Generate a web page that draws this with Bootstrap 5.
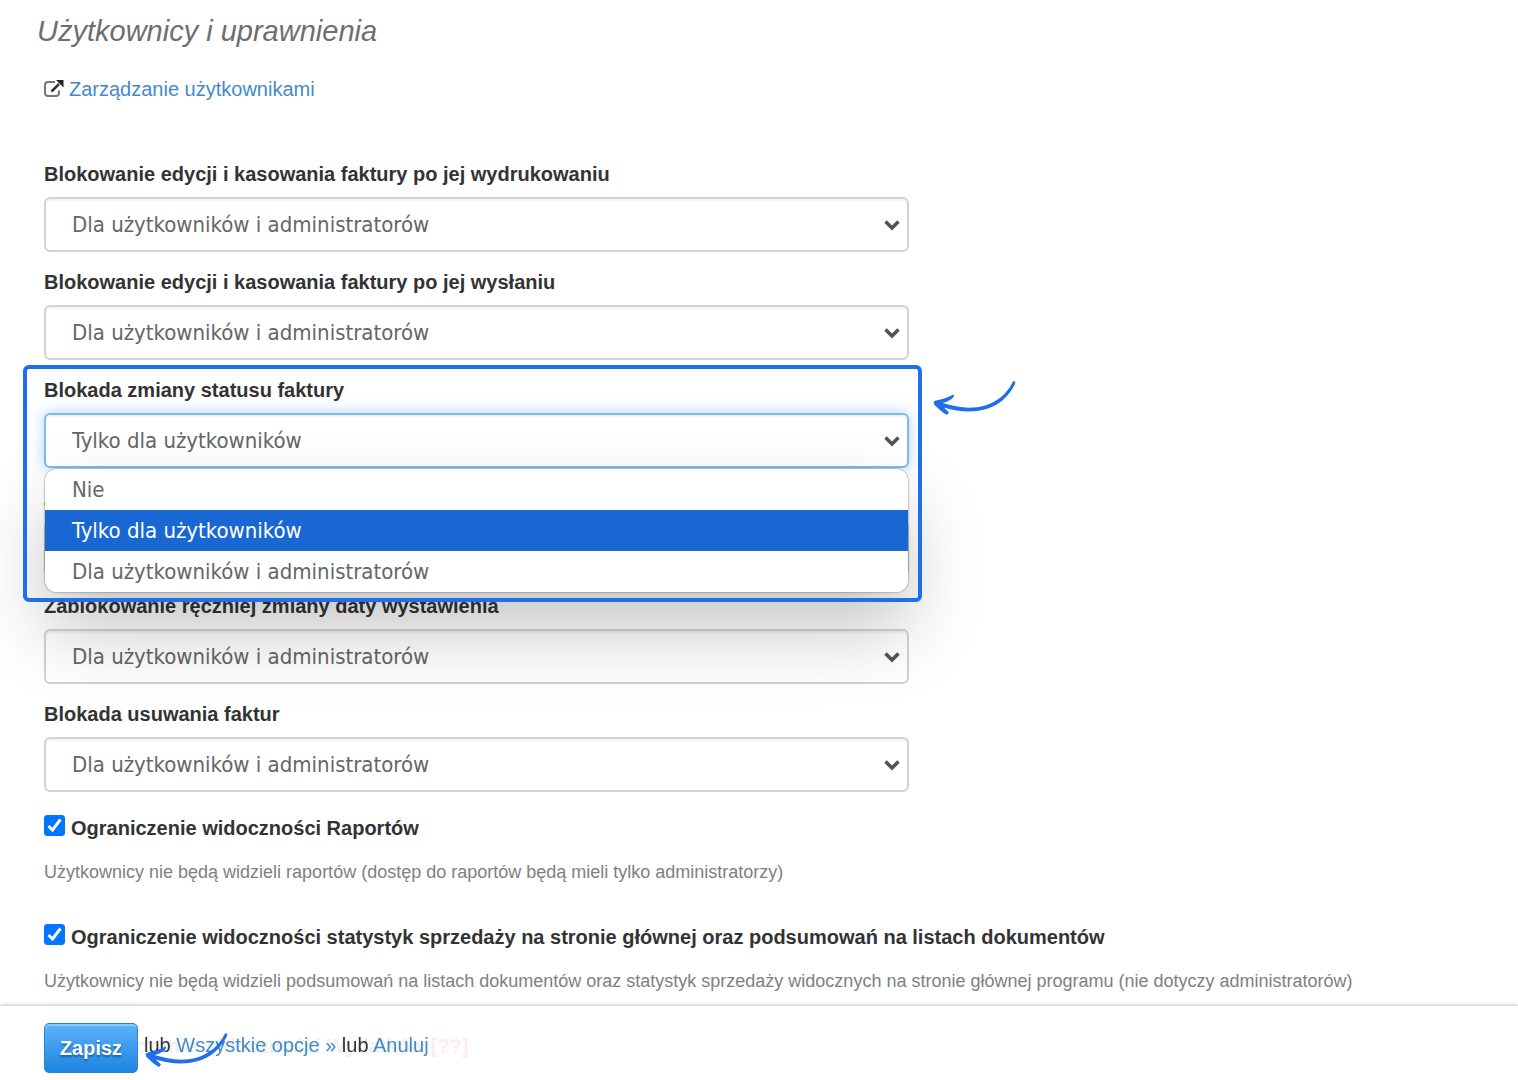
<!DOCTYPE html>
<html lang="pl">
<head>
<meta charset="utf-8">
<meta name="viewport" content="width=device-width, initial-scale=1">
<title>Użytkownicy i uprawnienia</title>
<link href="https://cdn.jsdelivr.net/npm/bootstrap@5.3.0/dist/css/bootstrap.min.css" rel="stylesheet">
<style>
  body { font-family: "Liberation Sans", Arial, sans-serif; font-size: 20px; line-height: 24px; color: #333; background: #fff; }
  a { color: #428bca; text-decoration: none; }
  .page-body { padding: 12px 44px 0; }
  .page-title { font-size: 29px; line-height: 38px; font-style: italic; font-weight: 400; color: #6b6e73; margin: 0 0 27px -7px; }
  .manage-row { gap: 5px; margin-bottom: 61px; }
  .settings { max-width: 865px; padding-bottom: 5px; }
  .setting { margin-bottom: 18px; }
  .setting-name { font-weight: 700; line-height: 24px; margin-bottom: 11px; }
  .form-select.setting-select {
    height: 55px; padding: 0 48px 0 26px; border: 2px solid #d3d3d3; border-radius: 6px;
    font-family: "DejaVu Sans Condensed", "Noto Sans", sans-serif; font-size: 22px; line-height: 32px; color: #666;
    background-image: url("data:image/svg+xml,%3Csvg xmlns='http://www.w3.org/2000/svg' viewBox='0 0 16 12'%3E%3Cpath fill='none' stroke='%23555' stroke-width='3.6' d='M1.5 2.5 8 9l6.500-6.500'/%3E%3C/svg%3E");
    background-position: right 7px center; background-size: 16px 12px;
    box-shadow: inset 0 2px 2px rgba(0,0,0,.05);
  }
  .form-select.setting-select.is-open { border-color: #7dbcee; box-shadow: inset 0 2px 2px rgba(0,0,0,.06), 0 0 14px rgba(102,175,233,.55); }
  .option-list {
    top: 100%; left: 1px; right: 1px; margin-top: 1px; z-index: 5; border-radius: 12px; overflow: hidden; background: #fff;
    box-shadow: 0 0 2px rgba(0,0,0,.65), 0 38px 76px rgba(0,0,0,.23);
  }
  .option-list button {
    display: block; width: 100%; height: 41px; padding: 0 27px; border: 0; background: #fff; text-align: left;
    font-family: "DejaVu Sans Condensed", "Noto Sans", sans-serif; font-size: 22px; line-height: 40px; color: #666;
  }
  .option-list button.chosen { background: #1967d2; color: #fff; }
  .callout-frame { top: -13px; left: -21px; right: -13px; bottom: -134px; border: 4px solid #1f6feb; border-radius: 6px; z-index: 6; pointer-events: none; }
  .callout-arrow { left: calc(100% + 23px); top: 1px; }
  .check-row { gap: 6px; line-height: 24px; }
  .check-row .form-check-input { width: 21px; height: 21px; margin: 0; border-radius: 3px; border: 1px solid #767676; }
  .check-row .form-check-input:checked {
    background-color: #0075ff; border-color: #0075ff; background-size: 19px 19px;
    background-image: url("data:image/svg+xml,%3Csvg xmlns='http://www.w3.org/2000/svg' viewBox='0 0 19 19'%3E%3Cpath fill='none' stroke='%23fff' stroke-width='3' d='M3.500 10 7.500 14 15.500 3.500'/%3E%3C/svg%3E");
  }
  .check-row label { font-weight: 700; padding-top: 1px; }
  .hint { font-size: 18px; line-height: 24px; color: #808080; margin: 20px 0 40px; }
  .unknown { color: #e00; }
  .action-bar { height: 74px; padding: 0 44px; gap: 6px; z-index: 10; background: rgba(255,255,255,.92); box-shadow: 0 -1px 3px rgba(0,0,0,.25); }
  .bar-links { padding-top: 4px; }
  .btn.save-btn {
    width: 94px; height: 50px; padding: 0; border: 1px solid #2a83c9; border-radius: 5px; color: #fff; font-size: 20px; font-weight: 700;
    background: linear-gradient(#5cb3fc, #1c84de); text-shadow: 0 2px 2px rgba(0,0,0,.35); box-shadow: inset 0 2px 1px rgba(255,255,255,.3);
    margin-top: 10px;
  }
  .save-arrow { left: calc(100% + 6px); top: 18px; }
</style>
</head>
<body>
<main class="page-body">
  <h1 class="page-title">Użytkownicy i uprawnienia</h1>
  <div class="manage-row d-flex align-items-center">
    <svg width="20" height="18" viewBox="0 0 20 18" fill="none" aria-hidden="true">
      <path d="M11 2H4Q1 2 1 5V13Q1 16 4 16H12Q15 16 15 13V10.500" stroke="#777" stroke-width="2"/>
      <path d="M7.500 11.500 15 4" stroke="#333" stroke-width="2.500"/>
      <path d="M12 0H19.500V7.500Z" fill="#222"/>
    </svg>
    <a href="#">Zarządzanie użytkownikami</a>
  </div>

  <div class="settings">
    <div class="setting">
      <label class="setting-name d-block" for="lockPrinted">Blokowanie edycji i kasowania faktury po jej wydrukowaniu</label>
      <select class="form-select setting-select" id="lockPrinted"><option>Nie</option><option>Tylko dla użytkowników</option><option selected>Dla użytkowników i administratorów</option></select>
    </div>
    <div class="setting">
      <label class="setting-name d-block" for="lockSent">Blokowanie edycji i kasowania faktury po jej wysłaniu</label>
      <select class="form-select setting-select" id="lockSent"><option>Nie</option><option>Tylko dla użytkowników</option><option selected>Dla użytkowników i administratorów</option></select>
    </div>
    <div class="setting position-relative">
      <label class="setting-name d-block" for="lockStatus">Blokada zmiany statusu faktury</label>
      <select class="form-select setting-select is-open" id="lockStatus"><option>Nie</option><option selected>Tylko dla użytkowników</option><option>Dla użytkowników i administratorów</option></select>
      <div class="option-list position-absolute">
        <button type="button">Nie</button>
        <button type="button" class="chosen">Tylko dla użytkowników</button>
        <button type="button">Dla użytkowników i administratorów</button>
      </div>
      <div class="callout-frame position-absolute"></div>
      <svg class="callout-arrow position-absolute" width="86" height="38" viewBox="0 0 86 38" aria-hidden="true">
        <path id="swoosh" fill="#1f6feb" d="M80.500 3.500C81 1.500 84.500 1.500 83 5C76 19 66 26 56 29.500C42 34 27 33 12 28.500L17 33.500L15 36C9 33 6 29 3 26.500C1 24.500 1.500 21.500 4 21.500C10 20.500 16 18.500 21.500 15.500C23 17 20.500 19.500 19.500 20C16 22.500 13 23.500 10.500 24C24 28 38 31 53 26.500C65 22.500 74 16 80.500 3.500Z"/>
      </svg>
    </div>
    <div class="setting">
      <label class="setting-name d-block" for="lockNumber">Zablokowanie zmiany numeru</label>
      <select class="form-select setting-select" id="lockNumber"><option>Nie</option></select>
    </div>
    <div class="setting">
      <label class="setting-name d-block" for="lockDate">Zablokowanie ręczniej zmiany daty wystawienia</label>
      <select class="form-select setting-select" id="lockDate"><option>Nie</option><option>Tylko dla użytkowników</option><option selected>Dla użytkowników i administratorów</option></select>
    </div>
    <div class="setting">
      <label class="setting-name d-block" for="lockDelete">Blokada usuwania faktur</label>
      <select class="form-select setting-select" id="lockDelete"><option>Nie</option><option>Tylko dla użytkowników</option><option selected>Dla użytkowników i administratorów</option></select>
    </div>
  </div>

  <div class="check-row d-flex align-items-start">
    <input class="form-check-input" type="checkbox" id="hideReports" checked>
    <label for="hideReports">Ograniczenie widoczności Raportów</label>
  </div>
  <p class="hint">Użytkownicy nie będą widzieli raportów (dostęp do raportów będą mieli tylko administratorzy)</p>
  <div class="check-row d-flex align-items-start">
    <input class="form-check-input" type="checkbox" id="hideStats" checked>
    <label for="hideStats">Ograniczenie widoczności statystyk sprzedaży na stronie głównej oraz podsumowań na listach dokumentów</label>
  </div>
  <p class="hint">Użytkownicy nie będą widzieli podsumowań na listach dokumentów oraz statystyk sprzedaży widocznych na stronie głównej programu (nie dotyczy administratorów)</p>
  <div class="check-row d-flex align-items-start">
    <input class="form-check-input" type="checkbox" id="hideCosts">
    <label for="hideCosts">Ograniczenie widoczności Wydatków <span class="unknown">[??]</span></label>
  </div>
</main>

<footer class="action-bar fixed-bottom d-flex align-items-center">
  <div class="position-relative">
    <button type="button" class="btn save-btn">Zapisz</button>
    <svg class="save-arrow position-absolute" width="86" height="38" viewBox="0 0 86 38" aria-hidden="true"><use href="#swoosh"/></svg>
  </div>
  <div class="bar-links">lub <a href="#">Wszystkie opcje »</a> lub <a href="#">Anuluj</a></div>
</footer>
<script src="https://cdn.jsdelivr.net/npm/bootstrap@5.3.0/dist/js/bootstrap.bundle.min.js"></script>
</body>
</html>
